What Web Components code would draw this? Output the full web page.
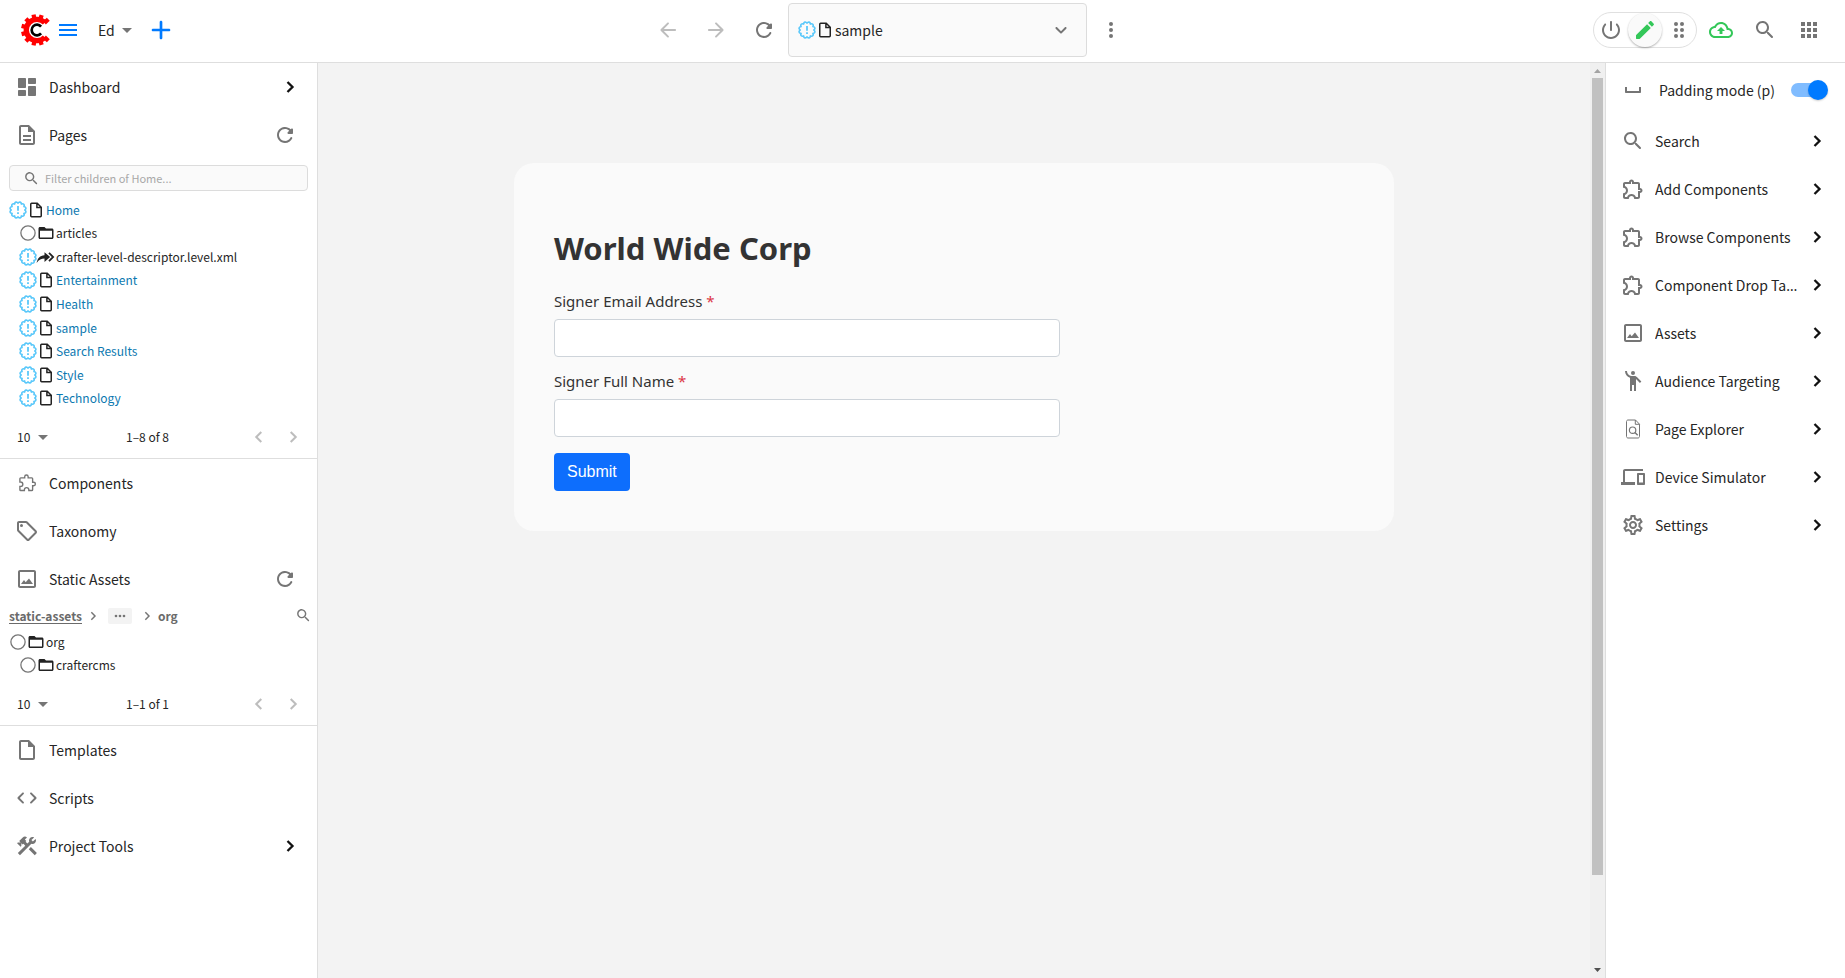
<!DOCTYPE html>
<html lang="en">
<head>
<meta charset="utf-8">
<title>sample - Crafter Studio</title>
<style>
html, body { margin: 0; height: 100%; }
body { font-family: "Noto Sans CJK SC", "Noto Sans", sans-serif; font-size: 14px; line-height: 20px; color: #262626; background: #fff; }
</style>
</head>
<body>
<studio-app></studio-app>
<script>
const seal = (() => {
  const n = 12, pt = (r, a) => (12 + r * Math.cos(a)).toFixed(2) + ' ' + (12 + r * Math.sin(a)).toFixed(2);
  let d = 'M' + pt(8.4, 0);
  for (let i = 0; i < n; i++) {
    const a = i * 2 * Math.PI / n, s = 2 * Math.PI / n;
    d += `C${pt(12, a + s * 0.1)} ${pt(12, a + s * 0.9)} ${pt(8.4, a + s)}`;
  }
  return d + 'Z';
})();

const teeth = [47, 18, -12, -44, -75, -105, -136, -168, 162, 133]
  .map(a => `<rect x="-1.600" y="-11.800" width="3.200" height="4" transform="rotate(${a})"/>`).join('');

const ICONS = {
  logo: `<g transform="translate(12.600 12)"><g fill="#f00">${teeth}</g><path d="M6-5.400A8 8 0 1 0 6 5.400" fill="none" stroke="#f00" stroke-width="4"/><path d="M3.200-2.600A4 4 0 1 0 3.200 2.600" fill="none" stroke="#000" stroke-width="2"/></g>`,
  menu: '<path d="M3 18h18v-2H3v2zm0-5h18v-2H3v2zm0-7v2h18V6H3z"/>',
  add: '<path d="M18 13h-5v5c0 .55-.45 1-1 1s-1-.45-1-1v-5H6c-.55 0-1-.45-1-1s.45-1 1-1h5V6c0-.55.45-1 1-1s1 .45 1 1v5h5c.55 0 1 .45 1 1s-.45 1-1 1z"/>',
  caret: '<path d="M7 10l5 5 5-5z"/>',
  back: '<path d="M19 11H7.83l4.88-4.88c.39-.39.39-1.03 0-1.42-.39-.39-1.02-.39-1.41 0l-6.59 6.59c-.39.39-.39 1.02 0 1.41l6.59 6.59c.39.39 1.02.39 1.41 0 .39-.39.39-1.02 0-1.41L7.83 13H19c.55 0 1-.45 1-1s-.45-1-1-1z"/>',
  forward: '<path d="M5 13h11.17l-4.88 4.88c-.39.39-.39 1.03 0 1.42.39.39 1.02.39 1.41 0l6.59-6.59c.39-.39.39-1.02 0-1.41l-6.58-6.6c-.39-.39-1.02-.39-1.41 0-.39.39-.39 1.02 0 1.41L16.17 11H5c-.55 0-1 .45-1 1s.45 1 1 1z"/>',
  refresh: '<path d="M17.65 6.35c-1.63-1.63-3.94-2.57-6.48-2.31-3.67.37-6.69 3.35-7.1 7.02C3.52 15.91 7.27 20 12 20c3.19 0 5.93-1.87 7.21-4.56.32-.67-.16-1.44-.9-1.44-.37 0-.72.2-.88.53-1.13 2.43-3.84 3.97-6.8 3.31-2.22-.49-4.01-2.3-4.48-4.52C5.31 9.44 8.26 6 12 6c1.66 0 3.14.69 4.22 1.78l-1.51 1.51c-.63.63-.19 1.71.7 1.71H19c.55 0 1-.45 1-1V6.41c0-.89-1.08-1.34-1.71-.71l-.64.65z"/>',
  down: '<path d="M8.12 9.29 12 13.17l3.88-3.88c.39-.39 1.02-.39 1.41 0 .39.39.39 1.02 0 1.41l-4.59 4.59c-.39.39-1.02.39-1.41 0L6.7 10.7c-.39-.39-.39-1.02 0-1.41.39-.38 1.03-.39 1.42 0z"/>',
  more: '<circle cx="12" cy="6" r="2"/><circle cx="12" cy="12" r="2"/><circle cx="12" cy="18" r="2"/>',
  power: '<path d="M12 3c-.55 0-1 .45-1 1v8c0 .55.45 1 1 1s1-.45 1-1V4c0-.55-.45-1-1-1zm5.14 2.86c-.39.39-.38 1-.01 1.39 1.13 1.2 1.83 2.8 1.87 4.57.09 3.83-3.08 7.13-6.91 7.17C8.18 19.05 5 15.9 5 12c0-1.84.71-3.51 1.87-4.76.37-.39.37-1-.01-1.38-.4-.4-1.05-.39-1.43.02C3.98 7.42 3.07 9.47 3 11.74c-.14 4.88 3.83 9.1 8.71 9.25 5.1.16 9.29-3.93 9.29-9 0-2.37-.92-4.51-2.42-6.11-.38-.41-1.04-.42-1.44-.02z"/>',
  edit: '<path d="M3 17.46v3.04c0 .28.22.5.5.5h3.04c.13 0 .26-.05.35-.15L17.81 9.94l-3.75-3.75L3.15 17.1c-.1.1-.15.22-.15.36zM20.71 7.04c.39-.39.39-1.02 0-1.41l-2.34-2.34c-.39-.39-1.02-.39-1.41 0l-1.83 1.83 3.75 3.75 1.83-1.83z"/>',
  grip: '<circle cx="9" cy="6" r="2"/><circle cx="9" cy="12" r="2"/><circle cx="9" cy="18" r="2"/><circle cx="15" cy="6" r="2"/><circle cx="15" cy="12" r="2"/><circle cx="15" cy="18" r="2"/>',
  cloud: '<path d="M19.35 10.04C18.67 6.59 15.64 4 12 4 9.11 4 6.6 5.64 5.35 8.04 2.34 8.36 0 10.91 0 14c0 3.31 2.69 6 6 6h13c2.76 0 5-2.24 5-5 0-2.64-2.05-4.78-4.65-4.96zM19 18H6c-2.21 0-4-1.79-4-4 0-2.05 1.53-3.76 3.56-3.97l1.07-.11.5-.95C8.08 7.14 9.94 6 12 6c2.62 0 4.88 1.86 5.39 4.43l.3 1.5 1.53.11c1.56.1 2.78 1.41 2.78 2.96 0 1.65-1.35 3-3 3zM8 13h2.55v3h2.9v-3H16l-4-4z"/>',
  search: '<path d="M15.5 14h-.79l-.28-.27c1.2-1.4 1.82-3.31 1.48-5.34-.47-2.78-2.79-5-5.59-5.34-4.23-.52-7.79 3.04-7.27 7.27.34 2.8 2.56 5.12 5.34 5.59 2.03.34 3.94-.28 5.34-1.48l.27.28v.79l4.25 4.25c.41.41 1.08.41 1.49 0 .41-.41.41-1.08 0-1.49L15.5 14zm-6 0C7.01 14 5 11.99 5 9.5S7.01 5 9.5 5 14 7.01 14 9.5 11.99 14 9.5 14z"/>',
  apps: '<path d="M4 8h4V4H4v4zm6 12h4v-4h-4v4zm-6 0h4v-4H4v4zm0-6h4v-4H4v4zm6 0h4v-4h-4v4zm6-10v4h4V4h-4zm-6 4h4V4h-4v4zm6 6h4v-4h-4v4zm0 6h4v-4h-4v4z"/>',
  dashboard: '<path d="M4 13h6c.55 0 1-.45 1-1V4c0-.55-.45-1-1-1H4c-.55 0-1 .45-1 1v8c0 .55.45 1 1 1zm0 8h6c.55 0 1-.45 1-1v-4c0-.55-.45-1-1-1H4c-.55 0-1 .45-1 1v4c0 .55.45 1 1 1zm10 0h6c.55 0 1-.45 1-1v-8c0-.55-.45-1-1-1h-6c-.55 0-1 .45-1 1v8c0 .55.45 1 1 1zM13 4v4c0 .55.45 1 1 1h6c.55 0 1-.45 1-1V4c0-.55-.45-1-1-1h-6c-.55 0-1 .45-1 1z"/>',
  pages: '<path d="M8 16h8v2H8zm0-4h8v2H8zm6-10H6c-1.1 0-2 .9-2 2v16c0 1.1.89 2 1.99 2H18c1.1 0 2-.9 2-2V8l-6-6zm4 18H6V4h7v5h5v11z"/>',
  file: '<path d="M14 2H6c-1.1 0-1.99.9-1.99 2L4 20c0 1.1.89 2 1.99 2H18c1.1 0 2-.9 2-2V8l-6-6zM6 20V4h7v5h5v11H6z"/>',
  doc: '<path d="M13.6 3H6.2C5.5 3 5 3.5 5 4.2v15.6c0 .7.5 1.2 1.2 1.2h11.600c.7 0 1.200-.5 1.200-1.200V8.400zM13.200 3v5.800H19" fill="none" stroke="currentColor" stroke-width="2"/>',
  components: '<path d="M10.500 4.500c.28 0 .5.22.5.5v2h6v6h2c.28 0 .5.22.5.5s-.22.5-.5.5h-2v6h-2.120c-.68-1.750-2.390-3-4.380-3s-3.700 1.250-4.380 3H4v-2.120c1.750-.68 3-2.390 3-4.380 0-1.990-1.240-3.700-2.990-4.380L4 7h6V5c0-.28.22-.5.5-.5m0-2C9.120 2.500 8 3.620 8 5H4c-1.100 0-1.990.9-1.990 2v3.800h.29c1.490 0 2.700 1.210 2.700 2.700s-1.210 2.700-2.700 2.700H2V20c0 1.100.9 2 2 2h3.800v-.3c0-1.490 1.210-2.700 2.700-2.700s2.700 1.210 2.700 2.700v.3H17c1.100 0 2-.9 2-2v-4c1.380 0 2.500-1.120 2.500-2.500S20.380 11 19 11V7c0-1.100-.9-2-2-2h-4c0-1.380-1.120-2.500-2.500-2.500z"/>',
  puzzle: '<path transform="translate(1.800 1.500) scale(.86)" d="M9.200 6.200V5c0-1.200.9-2.100 2-2.100s2 .9 2 2.100v1.200h4.200c.6 0 1 .4 1 1v4.200h1.200c1.200 0 2 .9 2 2s-.8 2-2 2h-1.200V20c0 .6-.4 1-1 1h-3.400v-.8c0-1.500-1.100-2.600-2.600-2.600s-2.600 1.100-2.600 2.600v.8H4.600c-.6 0-1-.4-1-1v-3.800h.8c1.500 0 2.600-1.200 2.600-2.600s-1.100-2.600-2.600-2.600h-.8V7.200c0-.6.4-1 1-1z" fill="none" stroke="currentColor" stroke-width="1.600"/>',
  tag: '<path d="M21.410 11.580l-9-9C12.050 2.220 11.550 2 11 2H4c-1.100 0-2 .9-2 2v7c0 .55.22 1.050.59 1.420l9 9c.36.36.86.58 1.410.58s1.050-.22 1.410-.59l7-7c.37-.36.59-.86.59-1.410s-.23-1.060-.59-1.420zM13 20.010L4 11V4h7v-.010l9 9-7 7.020z"/><circle cx="6.500" cy="6.500" r="1.500"/>',
  image: '<path d="M19 5v14H5V5h14m0-2H5c-1.100 0-2 .9-2 2v14c0 1.100.9 2 2 2h14c1.100 0 2-.9 2-2V5c0-1.100-.9-2-2-2z"/><path d="M6 17l3-4 1.700 2.200L14 11.500 18 17z"/>',
  code: '<path d="M8.700 15.900L4.800 12l3.900-3.900c.39-.39.39-1.010 0-1.400-.39-.39-1.010-.39-1.400 0l-4.590 4.590c-.39.39-.39 1.020 0 1.410l4.590 4.600c.39.39 1.010.39 1.400 0 .39-.39.39-1.010 0-1.400zm6.600 0l3.900-3.900-3.900-3.900c-.39-.39-.39-1.010 0-1.400.39-.39 1.010-.39 1.400 0l4.590 4.590c.39.39.39 1.020 0 1.410l-4.590 4.600c-.39.39-1.010.39-1.400 0-.39-.39-.39-1.010 0-1.400z"/>',
  tools: '<path d="M13.783 15.172l2.121-2.121 5.996 5.996-2.121 2.121zM17.500 10c1.930 0 3.500-1.570 3.500-3.500 0-.58-.16-1.120-.41-1.600l-2.700 2.700-1.490-1.490 2.700-2.700C18.620 3.160 18.080 3 17.500 3 15.570 3 14 4.570 14 6.500c0 .41.08.8.21 1.160l-1.850 1.850-1.780-1.780.71-.71-1.410-1.410L12 3.490c-1.170-1.170-3.070-1.170-4.240 0L4.220 7.030l1.410 1.410H2.810l-.71.71 3.540 3.540.71-.71V9.150l1.410 1.410.71-.71 1.780 1.780-7.410 7.410 2.120 2.120L16.340 9.790c.36.13.75.21 1.160.21z"/>',
  chevron: '<path d="M9.500 7l5 5-5 5" fill="none" stroke="currentColor" stroke-width="2.300"/>',
  next: '<path d="M9.500 6.500L15 12l-5.500 5.500" fill="none" stroke="currentColor" stroke-width="2.200"/>',
  prev: '<path d="M14.500 6.500L9 12l5.500 5.500" fill="none" stroke="currentColor" stroke-width="2.200"/>',
  fresh: `<path d="${seal}" fill="none" stroke="currentColor" stroke-width="2.200"/><path d="M10.800 6.500h2.400v6.500h-2.400zM10.800 15h2.400v2.400h-2.400z"/>`,
  clear: '<circle cx="12" cy="12" r="9.500" fill="none" stroke="#757575" stroke-width="1.700"/>',
  folder: '<path d="M20 6h-8l-2-2H4c-1.100 0-2 .9-2 2v12c0 1.100.9 2 2 2h16c1.100 0 2-.9 2-2V8c0-1.100-.9-2-2-2zm0 12H4V9h16v9z"/>',
  level: '<path d="M10 9.500V5.500l7.500 6.500-7.500 6.500v-4.500C6 14 2.500 15.500-.5 20c1-6.500 4.500-10 10.500-10.500z"/><path d="M16 6.500l5.500 5.500-5.500 5.500" fill="none" stroke="currentColor" stroke-width="2.400"/>',
  dots: '<circle cx="6" cy="12" r="2"/><circle cx="12" cy="12" r="2"/><circle cx="18" cy="12" r="2"/>',
  space: '<path d="M4 9v5c0 .55.45 1 1 1h14c.55 0 1-.45 1-1V9h-2v4H6V9z"/>',
  person: '<circle cx="12" cy="4" r="2"/><path d="M15.890 8.110C15.500 7.720 14.830 7 13.530 7h-2.540C8.240 6.990 6 4.750 6 2H4c0 3.160 2.110 5.840 5 6.710V22h2v-6h2v6h2V10.050L18.950 14l1.410-1.410-4.470-4.480z"/>',
  explorer: '<path d="M14.500 3H7c-.8 0-1.500.7-1.500 1.500v15c0 .8.7 1.500 1.500 1.500h10c.8 0 1.500-.7 1.500-1.500V7.200zM14.300 3v4.300h4.200" fill="none" stroke="currentColor"/><circle cx="11.600" cy="13.200" r="3.200" fill="none" stroke="currentColor" stroke-width="1.200"/><path d="M13.900 15.500l2.800 2.800" stroke="currentColor" stroke-width="1.400"/>',
  devices: '<path d="M4 6h18V4H4c-1.100 0-2 .9-2 2v11H0v3h14v-3H4V6zm19 2h-6c-.55 0-1 .45-1 1v10c0 .55.45 1 1 1h6c.55 0 1-.45 1-1V9c0-.55-.45-1-1-1zm-1 9.500h-4v-7.500h4v7.500z"/>',
  settings: '<path d="M19.430 12.980c.04-.32.07-.64.07-.98 0-.34-.03-.66-.07-.98l2.110-1.650c.19-.15.24-.42.12-.64l-2-3.460c-.09-.16-.26-.25-.44-.25-.06 0-.12.010-.17.030l-2.490 1c-.52-.4-1.080-.73-1.690-.98l-.38-2.650C14.460 2.180 14.250 2 14 2h-4c-.25 0-.46.18-.49.42l-.38 2.650c-.61.25-1.170.59-1.690.98l-2.490-1c-.06-.02-.12-.03-.18-.03-.17 0-.34.09-.43.25l-2 3.460c-.13.22-.07.49.12.64l2.110 1.650c-.04.32-.07.65-.07.98 0 .33.03.66.07.98l-2.110 1.650c-.19.15-.24.42-.12.64l2 3.460c.09.16.26.25.44.25.06 0 .12-.01.17-.03l2.490-1c.52.4 1.080.73 1.690.98l.38 2.650c.03.24.24.42.49.42h4c.25 0 .46-.18.49-.42l.38-2.650c.61-.25 1.170-.59 1.690-.98l2.490 1c.06.02.12.03.18.03.17 0 .34-.09.43-.25l2-3.460c.12-.22.07-.49-.12-.64l-2.110-1.650zm-1.980-1.710c.04.31.05.52.05.73 0 .21-.02.43-.05.73l-.14 1.130.89.7 1.080.84-.7 1.210-1.270-.51-1.040-.42-.9.68c-.43.32-.84.56-1.250.73l-1.060.43-.16 1.130-.2 1.350h-1.400l-.19-1.350-.16-1.130-1.060-.43c-.43-.18-.83-.41-1.230-.71l-.91-.7-1.060.43-1.270.51-.7-1.210 1.080-.84.89-.7-.14-1.130c-.03-.31-.05-.54-.05-.74s.02-.43.05-.73l.14-1.130-.89-.7-1.080-.84.7-1.210 1.270.51 1.040.42.9-.68c.43-.32.84-.56 1.250-.73l1.060-.43.16-1.130.2-1.350h1.390l.19 1.350.16 1.130 1.060.43c.43.18.83.41 1.230.71l.91.7 1.060-.43 1.270-.51.7 1.210-1.070.85-.89.7.14 1.130zM12 8c-2.210 0-4 1.790-4 4s1.790 4 4 4 4-1.790 4-4-1.790-4-4-4zm0 6c-1.100 0-2-.9-2-2s.9-2 2-2 2 .9 2 2-.9 2-2 2z"/>'
};

const RESET = `
  *, *::before, *::after { box-sizing: border-box; }
  button { display: flex; align-items: center; border: 0; padding: 0; margin: 0; background: none; font: inherit; color: inherit; text-align: left; cursor: pointer; }
  a { color: inherit; text-decoration: none; }
`;

function define(name, css, markup) {
  customElements.define(name, class extends HTMLElement {
    connectedCallback() {
      if (this.shadowRoot) return;
      const t = document.createElement('template');
      t.innerHTML = `<style>${RESET}${css}</style>` + (typeof markup === 'function' ? markup(this) : markup);
      this.attachShadow({ mode: 'open' }).append(t.content.cloneNode(true));
    }
  });
}

define('ui-icon',
  `:host { display: block; flex: none; width: 24px; height: 24px; color: #757575; }
   svg { display: block; width: 100%; height: 100%; fill: currentColor; overflow: visible; }`,
  el => `<svg viewBox="0 0 24 24" aria-hidden="true">${ICONS[el.getAttribute('name')] || ''}</svg>`);

define('icon-button',
  `:host { display: block; flex: none; }
   button { width: var(--size, 48px); height: var(--size, 48px); justify-content: center; border-radius: 50%; }
   ui-icon { width: var(--icon, 24px); height: var(--icon, 24px); color: var(--tint, #757575); }`,
  el => `<button type="button" aria-label="${el.getAttribute('label')}"><ui-icon name="${el.getAttribute('name')}"></ui-icon></button>`);

define('nav-row',
  `:host { display: flex; align-items: center; height: 48px; padding: 0 var(--row-end, 15px) 0 15px; }
   .main { flex: 1; min-width: 0; height: 100%; }
   .label { flex: 1; min-width: 0; margin-left: 10px; overflow: hidden; text-overflow: ellipsis; white-space: nowrap; font-family: "Noto Sans", sans-serif; }
   .label span { font-family: "Noto Sans CJK SC", "Noto Sans", sans-serif; }
   .arrow { margin-left: 4px; color: #111; }
   .refresh { --size: 24px; margin-right: 5px; }`,
  el => `<button class="main" type="button"><ui-icon name="${el.getAttribute('icon')}"></ui-icon><span class="label"><span><slot></slot></span></span>
    ${el.hasAttribute('arrow') ? '<ui-icon class="arrow" name="chevron"></ui-icon>' : ''}</button>
    ${el.hasAttribute('refresh') ? '<icon-button class="refresh" name="refresh" label="Refresh"></icon-button>' : ''}`);

define('tree-item',
  `:host { display: flex; align-items: center; padding-left: 9px; font-size: 12px; }
   :host([child]) { padding-left: 19px; }
   ui-icon { width: 18px; height: 18px; color: #222; }
   .state { color: #5ac8fa; }
   a, button { margin-left: 1px; white-space: nowrap; }
   a { color: #0c78b0; }`,
  el => {
    const kind = el.getAttribute('kind') || 'doc';
    const state = kind === 'folder' ? 'clear' : 'fresh';
    const text = kind === 'doc' ? '<a href="#"><slot></slot></a>' : '<button type="button"><slot></slot></button>';
    return `<ui-icon class="state" name="${state}"></ui-icon><ui-icon name="${kind}"></ui-icon>${text}`;
  });

define('tree-pager',
  `:host { display: flex; align-items: center; height: 43px; padding: 0 12px 0 17px; border-bottom: 1px solid #dedede; font-size: 12px; }
   .size { display: flex; align-items: center; width: 109px; }
   select { appearance: none; border: 0; padding: 0; width: 34px; margin-right: -20px; background: none; font: inherit; color: inherit; }
   .size ui-icon { pointer-events: none; }
   .steps { display: flex; margin-left: auto; gap: 10px; --size: 24px; --tint: #bdbdbd; --icon: 22px; }`,
  el => `<div class="size"><select aria-label="Items per page"><option>10</option><option>20</option></select><ui-icon name="caret"></ui-icon></div>
    <span>${el.getAttribute('range')}</span>
    <div class="steps"><icon-button name="prev" label="Previous page"></icon-button><icon-button name="next" label="Next page"></icon-button></div>`);

define('tree-filter',
  `:host { display: flex; align-items: center; gap: 5px; height: 26px; margin: 6px 9px 7px; padding: 0 13px; border: 1px solid #dcdcdc; border-radius: 4px; background: #fafafa; }
   ui-icon { width: 17px; height: 17px; }
   input { flex: 1; min-width: 0; border: 0; outline: 0; padding: 0; background: none; font: inherit; font-size: 11px; color: inherit; }
   input::placeholder { color: #a8a8a8; opacity: 1; }`,
  `<ui-icon name="search"></ui-icon><input type="text" aria-label="Filter children of Home" placeholder="Filter children of Home...">`);

define('asset-path',
  `:host { display: flex; align-items: center; height: 25px; margin-bottom: 2px; padding: 0 5px 0 9px; font-size: 12px; font-weight: bold; color: #6b6b6b; }
   a { text-decoration: underline; text-underline-offset: 2px; }
   .sep { width: 16px; height: 16px; margin: 0 3px; }
   .more { height: 16px; padding: 0 4px; margin: 0 4px; background: #f3f3f3; border-radius: 2px; }
   .more ui-icon { width: 16px; height: 16px; }
   .find { margin-left: auto; --size: 18px; --icon: 17px; }`,
  `<a href="#">static-assets</a><ui-icon class="sep" name="next"></ui-icon>
   <button class="more" type="button" aria-label="Show path"><ui-icon name="dots"></ui-icon></button>
   <ui-icon class="sep" name="next"></ui-icon><span>org</span>
   <icon-button class="find" name="search" label="Search assets"></icon-button>`);

define('studio-sidebar',
  `:host { display: block; width: 318px; flex: none; border-right: 1px solid #dedede; background: #fff; }
   .tree { display: grid; grid-auto-rows: 1fr; margin-bottom: 6px; }
   .pages { height: 212px; }
   .assets { height: 47px; }`,
  `<nav aria-label="Project">
    <nav-row icon="dashboard" arrow>Dashboard</nav-row>
    <nav-row icon="pages" refresh>Pages</nav-row>
    <tree-filter></tree-filter>
    <div class="tree pages">
      <tree-item>Home</tree-item>
      <tree-item child kind="folder">articles</tree-item>
      <tree-item child kind="level">crafter-level-descriptor.level.xml</tree-item>
      <tree-item child>Entertainment</tree-item>
      <tree-item child>Health</tree-item>
      <tree-item child>sample</tree-item>
      <tree-item child>Search Results</tree-item>
      <tree-item child>Style</tree-item>
      <tree-item child>Technology</tree-item>
    </div>
    <tree-pager range="1–8 of 8"></tree-pager>
    <nav-row icon="puzzle">Components</nav-row>
    <nav-row icon="tag">Taxonomy</nav-row>
    <nav-row icon="image" refresh>Static Assets</nav-row>
    <asset-path></asset-path>
    <div class="tree assets">
      <tree-item kind="folder">org</tree-item>
      <tree-item child kind="folder">craftercms</tree-item>
    </div>
    <tree-pager range="1–1 of 1"></tree-pager>
    <nav-row icon="file">Templates</nav-row>
    <nav-row icon="code">Scripts</nav-row>
    <nav-row icon="tools" arrow>Project Tools</nav-row>
  </nav>`);

define('studio-toolbar',
  `:host { display: flex; align-items: center; justify-content: space-between; height: 63px; padding: 0 14px 3px 20px; border-bottom: 1px solid #dedede; background: #fff; }
   .group { display: flex; align-items: center; }
   .left { --tint: #007aff; padding-right: 3px; }
   .logo { width: 32px; height: 32px; }
   .burger { --size: 32px; }
   .site { height: 32px; padding-left: 14px; }
   .add { --size: 44px; --icon: 32px; }
   .off { --tint: #bdbdbd; }
   .address { width: 299px; height: 54px; margin-top: 1px; padding: 0 13px 0 9px; border: 1px solid #dcdcdc; border-radius: 4px; background: #fafafa; }
   .address ui-icon { width: 18px; height: 18px; }
   .address .state { color: #5ac8fa; }
   .address .doc { color: #222; }
   .address span { flex: 1; padding-left: 1px; }
   .address .open { width: 24px; height: 24px; }
   .modes { display: flex; align-items: center; height: 36px; margin-right: 2px; border: 1px solid #e0e0e0; border-radius: 18px; --size: 34px; }
   .edit { --tint: #34c759; border-radius: 50%; background: #fafafa; box-shadow: 0 1px 2px rgba(0,0,0,.3); }
   .tools { --size: 44px; }
   .publish { --tint: #34c759; }`,
  `<div class="group left">
     <ui-icon class="logo" name="logo"></ui-icon>
     <icon-button class="burger" name="menu" label="Toggle sidebar"></icon-button>
     <button class="site" type="button">Ed<ui-icon name="caret"></ui-icon></button>
     <icon-button class="add" name="add" label="Create content"></icon-button>
   </div>
   <div class="group">
     <icon-button class="off" name="back" label="Back"></icon-button>
     <icon-button class="off" name="forward" label="Forward"></icon-button>
     <icon-button name="refresh" label="Reload"></icon-button>
     <button class="address" type="button"><ui-icon class="state" name="fresh"></ui-icon><ui-icon class="doc" name="doc"></ui-icon><span>sample</span><ui-icon class="open" name="down"></ui-icon></button>
     <icon-button name="more" label="Options"></icon-button>
   </div>
   <div class="group tools">
     <div class="modes">
       <icon-button name="power" label="Preview off"></icon-button>
       <icon-button class="edit" name="edit" label="Edit mode"></icon-button>
       <icon-button name="grip" label="Move mode"></icon-button>
     </div>
     <icon-button class="publish" name="cloud" label="Publishing status"></icon-button>
     <icon-button name="search" label="Search"></icon-button>
     <icon-button name="apps" label="Global menu"></icon-button>
   </div>`);

define('form-field',
  `:host { display: block; margin-bottom: 16px; }
   label { display: block; margin-bottom: 10px; font: 15px/16px "Noto Sans", sans-serif; color: #333; }
   em { font-style: normal; color: #dc3545; }
   input { display: block; width: 100%; height: 38px; padding: 6px 12px; border: 1px solid #ced4da; border-radius: 4px; background: #fff; font: inherit; }`,
  el => `<label for="f">${el.getAttribute('label')} <em>*</em></label><input id="f" type="${el.getAttribute('type')}" required>`);

define('site-preview',
  `:host { display: flex; flex: 1; min-width: 0; background: #f3f3f3; }
   main { flex: 1; min-width: 0; padding: 100px 24px 0; }
   section { max-width: 880px; margin: 0 auto; padding: 66px 40px 40px; border-radius: 20px; background: #fafafa; }
   form { max-width: 506px; }
   h1 { margin: 0 0 26px; font: bold 31px/38px "Noto Sans", sans-serif; color: #333; }
   .submit { height: 38px; padding: 0 13px; border-radius: 4px; background: #0d6efd; color: #fff; font: 16px/24px "Liberation Sans", sans-serif; }
   .bar { display: flex; flex-direction: column; width: 15px; padding: 0 2px; background: #f0f0f0; }
   .bar svg { display: block; width: 11px; height: 15px; fill: #a3a3a3; }
   .bar svg.down { fill: #505050; }
   .track { flex: 1; }
   .thumb { height: 90%; background: #c1c1c1; }`,
  `<main><section><h1>World Wide Corp</h1>
    <form>
      <form-field label="Signer Email Address" type="email"></form-field>
      <form-field label="Signer Full Name" type="text"></form-field>
      <button class="submit" type="button">Submit</button>
    </form></section></main>
   <div class="bar" aria-hidden="true">
     <svg viewBox="0 0 11 15"><path d="M2 10h7L5.500 6z"/></svg>
     <div class="track"><div class="thumb"></div></div>
     <svg class="down" viewBox="0 0 11 15"><path d="M2 5h7L5.500 9z"/></svg>
   </div>`);

define('mode-switch',
  `:host { display: block; }
   label { display: flex; align-items: center; height: 54px; padding: 0 18px 0 15px; }
   span { flex: 1; padding-left: 14px; white-space: nowrap; }
   input { appearance: none; position: relative; width: 36px; height: 14px; margin: 0; border-radius: 7px; background: #80bcff; }
   input::after { content: ""; position: absolute; right: -1px; top: -3px; width: 20px; height: 20px; border-radius: 50%; background: #007aff; box-shadow: 0 1px 2px rgba(0,0,0,.2); }`,
  `<label><ui-icon name="space"></ui-icon><span><slot></slot></span><input type="checkbox" role="switch" checked></label>`);

define('tools-panel',
  `:host { display: block; flex: none; width: 240px; border-left: 1px solid #dedede; background: #fff; --row-end: 16px; }`,
  `<mode-switch>Padding mode (p)</mode-switch>
   <nav aria-label="Tools">
    <nav-row icon="search" arrow>Search</nav-row>
    <nav-row icon="components" arrow>Add Components</nav-row>
    <nav-row icon="components" arrow>Browse Components</nav-row>
    <nav-row icon="components" arrow>Component Drop Targets</nav-row>
    <nav-row icon="image" arrow>Assets</nav-row>
    <nav-row icon="person" arrow>Audience Targeting</nav-row>
    <nav-row icon="explorer" arrow>Page Explorer</nav-row>
    <nav-row icon="devices" arrow>Device Simulator</nav-row>
    <nav-row icon="settings" arrow>Settings</nav-row>
   </nav>`);

define('studio-app',
  `:host { display: flex; flex-direction: column; min-height: 100vh; }
   .body { display: flex; flex: 1; align-items: stretch; }`,
  `<studio-toolbar></studio-toolbar>
   <div class="body"><studio-sidebar></studio-sidebar><site-preview></site-preview><tools-panel></tools-panel></div>`);
</script>
</body>
</html>
